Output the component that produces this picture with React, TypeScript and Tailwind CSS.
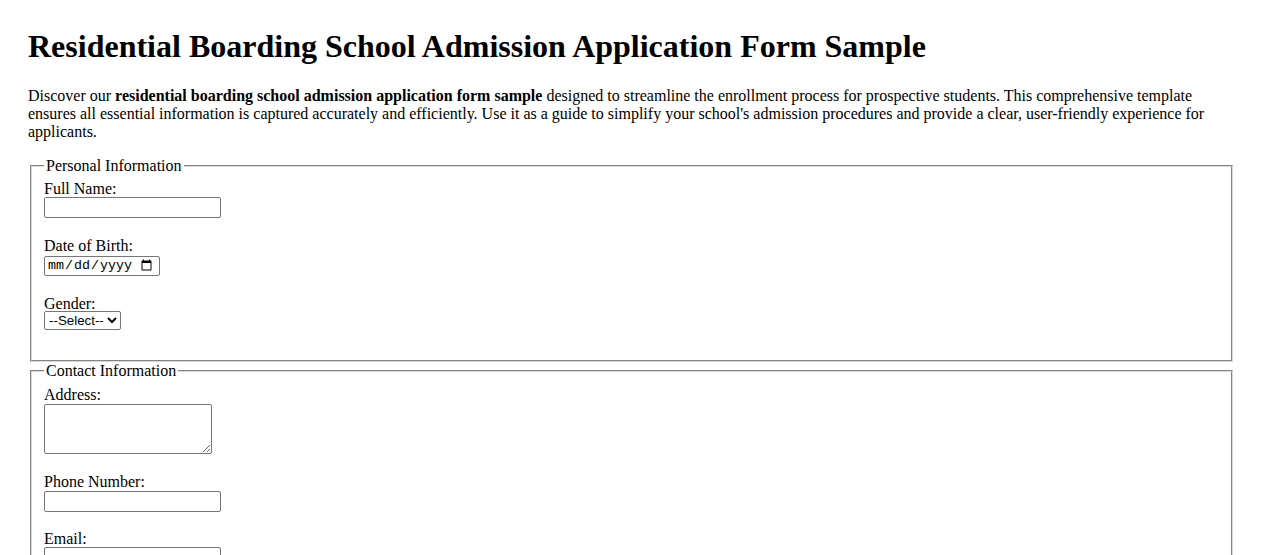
import React from "react";

// Shared look of the text-like controls (Chrome's default form control style).
const textInput =
  "block h-[21px] w-[177px] rounded-[2px] border border-solid border-[#767676] bg-white px-[3px] py-[2px] font-['Liberation_Sans',Arial,sans-serif] text-[13.333px] leading-[normal] text-black";

export default function App() {
  return (
    <div className="min-h-screen bg-white px-[28px] pt-[28px] pb-[28px] font-['Liberation_Serif','Times_New_Roman',serif] text-[16px] leading-[normal] text-black">
      <h1 className="mb-[22.4px] text-[32px] font-bold leading-[normal]">
        Residential Boarding School Admission Application Form Sample
      </h1>
      <p className="mb-[16px]">
        Discover our{" "}
        <strong className="font-bold">
          residential boarding school admission application form sample
        </strong>{" "}
        designed to streamline the enrollment process for prospective students. This
        comprehensive template ensures all essential information is captured accurately and
        efficiently. Use it as a guide to simplify your school's admission procedures and
        provide a clear, user-friendly experience for applicants.
      </p>

      <form onSubmit={(e) => e.preventDefault()}>
        <fieldset className="mx-[2px] min-w-0 border-2 border-[#d8d8d8] [border-style:groove] px-[12px] pt-[5.6px] pb-[10px]">
          <legend className="px-[2px] leading-[normal]">Personal Information</legend>
          <div className="flex flex-col items-start">
            <label htmlFor="fullName" className="mt-[-0.5px] block leading-[normal]">
              Full Name:
            </label>
            <input id="fullName" name="fullName" type="text" className={`${textInput} mt-[-1px]`} />

            <label htmlFor="dob" className="mt-[18.9px] block leading-[normal]">
              Date of Birth:
            </label>
            <input
              id="dob"
              name="dob"
              type="date"
              className="mt-[0.4px] block h-[20px] w-[116px] rounded-[2px] border border-solid border-[#767676] bg-white pr-[4px] pl-[2px] font-['Liberation_Mono','Courier_New',monospace] text-[13.333px] leading-[normal] text-black"
            />

            <label htmlFor="gender" className="mt-[18.9px] block leading-[normal]">
              Gender:
            </label>
            <select
              id="gender"
              name="gender"
              defaultValue=""
              className="mt-[-1.5px] mb-[19.9px] block h-[19px] min-h-[19px] w-[77px] rounded-[2px] border border-solid border-[#767676] bg-white font-['Liberation_Sans',Arial,sans-serif] text-[13.333px] leading-[normal] text-black"
            >
              <option value="">--Select--</option>
              <option value="male">Male</option>
              <option value="female">Female</option>
              <option value="other">Other</option>
            </select>
          </div>
        </fieldset>

        <fieldset className="mx-[2px] min-w-0 border-2 border-[#d8d8d8] [border-style:groove] px-[12px] pt-[5.6px] pb-[10px]">
          <legend className="px-[2px] leading-[normal]">Contact Information</legend>
          <div className="flex flex-col items-start">
            <label htmlFor="address" className="block leading-[normal]">
              Address:
            </label>
            <textarea
              id="address"
              name="address"
              className="mt-[0.6px] block h-[50px] w-[168px] rounded-[2px] border border-solid border-[#767676] bg-white px-[2px] py-[2px] font-['Liberation_Mono','Courier_New',monospace] text-[13.333px] leading-[normal] text-black"
            />

            <label htmlFor="phone" className="mt-[18.9px] block leading-[normal]">
              Phone Number:
            </label>
            <input id="phone" name="phone" type="tel" className={`${textInput} mt-[-0.5px]`} />

            <label htmlFor="email" className="mt-[18.4px] block leading-[normal]">
              Email:
            </label>
            <input
              id="email"
              name="email"
              type="email"
              className={`${textInput} mt-[-1px] mb-[17px]`}
            />
          </div>
        </fieldset>

        <fieldset className="mx-[2px] min-w-0 border-2 border-[#d8d8d8] [border-style:groove] px-[12px] pt-[5.6px] pb-[10px]">
          <legend className="px-[2px] leading-[normal]">Academic Background</legend>
          <div className="flex flex-col items-start">
            <label htmlFor="prevSchool" className="block leading-[normal]">
              Previous School:
            </label>
            <input id="prevSchool" name="prevSchool" type="text" className={`${textInput} mt-[-1px]`} />

            <label htmlFor="grade" className="mt-[18.9px] block leading-[normal]">
              Grade Applying For:
            </label>
            <input
              id="grade"
              name="grade"
              type="text"
              className={`${textInput} mt-[-1px] mb-[17px]`}
            />
          </div>
        </fieldset>

        <button
          type="submit"
          className="mt-[16px] rounded-[2px] border border-solid border-[#767676] bg-[#efefef] px-[6px] py-[1px] font-['Liberation_Sans',Arial,sans-serif] text-[13.333px] text-black"
        >
          Submit Application
        </button>
      </form>
    </div>
  );
}
